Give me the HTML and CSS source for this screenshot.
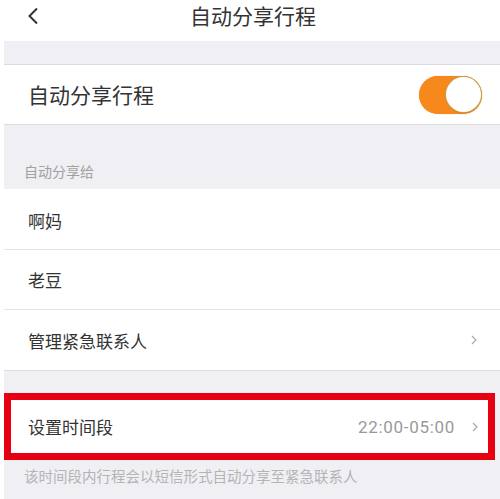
FILE: index.html
```html
<!DOCTYPE html>
<html lang="zh">
<head>
<meta charset="utf-8">
<link rel="stylesheet" href="styles.css">
</head>
<body>
<div class="page">
  <header class="nav">
    <svg class="back" width="12" height="18" viewBox="0 0 12 18"><path d="M10 1.5 L2.5 9 L10 16.5" fill="none" stroke="#333" stroke-width="2"/></svg>
    <div class="nav-title">自动分享行程</div>
  </header>
  <div class="gap-top"></div>
  <div class="row toggle-row">
    <span class="toggle-label">自动分享行程</span>
    <span class="switch"><span class="knob"></span></span>
  </div>
  <div class="section-label">自动分享给</div>
  <div class="group">
    <div class="row item">啊妈</div>
    <div class="row item">老豆</div>
    <div class="row item"><span>管理紧急联系人</span><svg class="chev" width="6" height="10" viewBox="0 0 6 10"><path d="M1 1 L5 5 L1 9" fill="none" stroke="#aaa" stroke-width="1.2"/></svg></div>
  </div>
  <div class="gap-mid"></div>
  <div class="highlight">
    <div class="row time-row">
      <span>设置时间段</span>
      <span class="right"><span class="time">22:00-05:00</span><svg class="chev" width="6" height="10" viewBox="0 0 6 10"><path d="M1 1 L5 5 L1 9" fill="none" stroke="#aaa" stroke-width="1.2"/></svg></span>
    </div>
  </div>
  <div class="footer-note">该时间段内行程会以短信形式自动分享至紧急联系人</div>
</div>
</body>
</html>
```
FILE: styles.css
```css
html, body {
  margin: 0;
  padding: 0;
  background: #ffffff;
  font-family: "Noto Sans CJK SC", "Noto Sans", sans-serif;
  color: #333333;
}
.page {
  margin-left: 4px;
  width: 496px;
  height: 499px;
  background: #efeff4;
  overflow: hidden;
}
.nav {
  height: 41px;
  background: #ffffff;
  display: flex;
  align-items: center;
  justify-content: center;
  position: relative;
  margin-left: -4px;
  width: 500px;
}
.back {
  position: absolute;
  left: 27px;
  top: 7px;
}
.nav-title {
  font-size: 21px;
  line-height: 28px;
  margin-top: -12px;
  margin-left: 6px;
  color: #333;
}
.gap-top {
  height: 23px;
  border-bottom: 1px solid #dcdce0;
}
.row {
  background: #ffffff;
  display: flex;
  align-items: center;
  justify-content: space-between;
  box-sizing: border-box;
}
.toggle-row {
  height: 60px;
  padding: 0 18px 0 24px;
  border-bottom: 1px solid #dcdce0;
}
.toggle-label {
  font-size: 21px;
  margin-top: -2px;
}
.switch {
  width: 63px;
  height: 38px;
  border-radius: 19px;
  background: #f7891c;
  display: flex;
  align-items: center;
  justify-content: flex-end;
  box-sizing: border-box;
  padding-right: 1px;
  box-shadow: 0 0 1px #e0a040;
}
.knob {
  width: 35px;
  height: 35px;
  border-radius: 50%;
  background: #ffffff;
  box-shadow: 0 0 0 1px #c9a050, 0 1px 2px rgba(0,0,0,0.2);
}
.section-label {
  height: 64px;
  box-sizing: border-box;
  padding: 37px 0 0 20px;
  font-size: 14px;
  line-height: 18px;
  color: #a0a0a0;
}
.group .item {
  height: 60px;
  padding: 0 23px 0 24px;
  font-size: 17px;
  border-bottom: 1px solid #e4e4e8;
}
.group .item:last-child {
  border-bottom: none;
}
.group .item:first-child {
  height: 61px;
  padding-top: 2px;
}
.gap-mid {
  height: 22px;
  border-top: 1px solid #dcdce0;
}
.highlight {
  width: 491px;
  box-sizing: border-box;
  border: 7px solid #e60012;
  height: 67px;
}
.time-row {
  height: 53px;
  padding: 0 10px 0 17px;
  font-size: 17px;
}
.right {
  display: flex;
  align-items: center;
  gap: 17px;
}
.time {
  font-family: "Roboto", "Noto Sans", sans-serif;
  font-size: 17px;
  color: #9a9a9a;
  letter-spacing: 0.7px;
}
.footer-note {
  padding: 6px 0 0 20px;
  font-size: 14.5px;
  line-height: 20px;
  color: #b4b4b4;
}
```
